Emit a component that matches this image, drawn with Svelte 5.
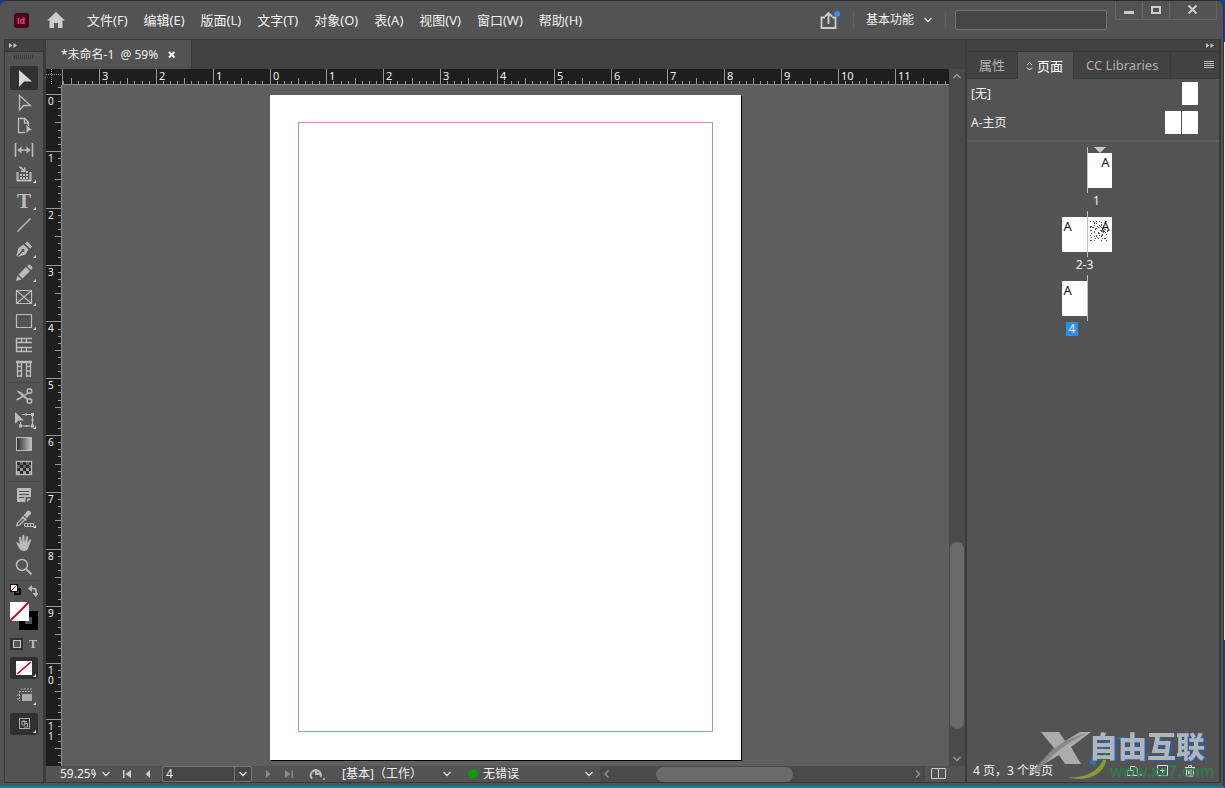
<script lang="ts">
	// Page layout workspace: menu bar, tool strip, document view with rulers, pages panel.
	const INCH = 56.85;
	const PAGE_W = 471;
	const PAGE_TOP = 10;

	let rulerWidth = $state(886);
	let rulerHeight = $state(681);

	const menus = ['文件(F)', '编辑(E)', '版面(L)', '文字(T)', '对象(O)', '表(A)', '视图(V)', '窗口(W)', '帮助(H)'];

	// One tick per eighth of an inch, numbered on the whole inch
	function ticks(origin: number, length: number) {
		const out = [];
		const first = Math.ceil((-origin / INCH) * 8);
		const last = Math.floor(((length - origin) / INCH) * 8);
		for (let i = first; i <= last; i++) {
			const major = i % 8 === 0;
			out.push({
				pos: Math.round(origin + (i * INCH) / 8),
				size: major ? 16 : i % 4 === 0 ? 7 : 4,
				label: major ? String(Math.abs(i / 8)) : ''
			});
		}
		return out;
	}

	const hTicks = $derived(ticks((rulerWidth - PAGE_W) / 2 - 1, rulerWidth));
	const vTicks = $derived(ticks(PAGE_TOP - 1, rulerHeight));

	// Icon bodies on a 28x24 grid
	const icons: Record<string, string> = {
		select: '<path d="M9 4v17l5-5.500h8z"/>',
		direct: '<path d="M9.500 5.500v14.500l4-4.500h7z" fill="none" stroke="currentColor" stroke-width="1.300"/>',
		page: '<path d="M15 18.500H8.500v-14h6.500l3.500 4V12M14.500 4.500v4.500h4" fill="none" stroke="currentColor" stroke-width="1.300"/><path d="M16.500 11l5.500 5-3.200.4-2.300 3z"/>',
		gap: '<path d="M5.500 5v14M22.500 5v14M8 12h12" fill="none" stroke="currentColor" stroke-width="1.600"/><path d="M7.500 12l4-3.500v7zM20.500 12l-4-3.500v7z"/>',
		collect: '<path d="M7.500 10v8.500h13V10" fill="none" stroke="currentColor" stroke-width="2"/><path d="M9 4.500h2l3 3V5.500h1.500V10H11V8.500h1.800L9 5.500zM10 12h2v2h-2zM13 12h2v2h-2zM16 12h2v2h-2zM10 15h2v2h-2zM13 15h2v2h-2zM16 15h2v2h-2zM16 9h2v2h-2z"/>',
		type: '<text x="14" y="19" text-anchor="middle" font-family="Liberation Serif, serif" font-weight="700" font-size="21">T</text>',
		line: '<path d="M7.500 18.500l13-13" fill="none" stroke="currentColor" stroke-width="1.400"/>',
		pen: '<path d="M6 20l2.500-9 5-3.500 5 5-3 5L7.500 20l5-5a1.500 1.500 0 1 0-1-1zM15 6.500l2.500-2 4.500 5-2 2z"/>',
		pencil: '<path d="M6 20l1.500-5.500 4 4zM8.500 13.500l7.500-7.500 4 4-7.500 7.500zM17 5l1.500-1.300h1.500L22.300 6v1.500L21 9z"/>',
		frame: '<path d="M6.500 5.500h15v13h-15zM6.500 5.500l15 13M21.500 5.500l-15 13" fill="none" stroke="currentColor" stroke-width="1.200"/>',
		rect: '<path d="M6.500 5.500h15v13h-15z" fill="none" stroke="currentColor" stroke-width="1.200"/>',
		rows: '<path d="M6 5.500h16M6 9.500h16M6 14.500h16M6 18.500h16M6.500 5v14M11.500 5.500v4M16.500 5.500v4M11.500 14.500v4M16.500 14.500v4" fill="none" stroke="currentColor" stroke-width="1.400"/>',
		cols: '<path d="M6 5.500h16M6 4.500h16M7.500 5v15M11.500 5v15M16.500 5v15M20.500 5v15M7.500 9.500h4M16.500 9.500h4M7.500 14h4M16.500 14h4M7.500 19h4M16.500 19h4" fill="none" stroke="currentColor" stroke-width="1.300"/>',
		scissors: '<g fill="none" stroke="currentColor" stroke-width="1.500"><circle cx="19.500" cy="7" r="2.300"/><circle cx="19.500" cy="17" r="2.300"/></g><path d="M6 6.500c3 .2 6 2 8 4.200l3.800-2.200.7 1L8.500 16l-2 .2v-1.200l5.500-3zM13 13l1.500-1.500 4 3.500-.8 1.200z"/>',
		transform: '<path d="M5 4v12l3.500-3.500H14z"/><path d="M12 6.500h10.500v11.500H10.500v-4" fill="none" stroke="currentColor" stroke-width="1.200"/><path d="M21 5h3v3h-3zM21 16.500h3v3h-3zM9 16.500h3v3H9zM15 5.500h2v2h-2zM15.500 17h2v2h-2zM21.500 11h2v2h-2z"/>',
		gradient: '<defs><linearGradient id="tone"><stop offset="0" stop-color="#2b2b2b"/><stop offset="1" stop-color="#c4c4c4"/></linearGradient></defs><rect x="6.500" y="5.500" width="15" height="13" fill="url(#tone)" stroke="currentColor"/>',
		feather: '<rect x="6.500" y="5.500" width="15" height="13" fill="#262626" stroke="currentColor" stroke-width="1.300"/><g opacity=".45"><path d="M10 6h3v3h-3zM16 6h3v3h-3zM7 9h3v3H7zM13 9h3v3h-3zM19 9h2v3h-2z"/></g><path d="M10 12h3v3h-3zM16 12h3v3h-3zM7 15h3v3H7zM13 15h3v3h-3zM19 15h2v3h-2z" opacity=".8"/>',
		note: '<path d="M7 5h14v9h-5.500v5H7zM17 15.500h4L17 19z"/><path d="M9 8.500h10M9 11.500h10M9 14.500h5" stroke="#535353" stroke-width="1.200"/>',
		dropper: '<path d="M13.500 8l1.500-1 2-3c2-1.800 5.500 1.400 3.600 3.600L18 9.500 17 11.500z"/><path d="M14 9.500L7.500 16l-.8 2.800 2.800-.8L16 11.500M12 10l4.500 3.500" fill="none" stroke="currentColor" stroke-width="1.300"/><path d="M14.500 16.500h9v3h-9zM17.500 16.500v3M20.500 16.500v3" fill="none" stroke="currentColor"/>',
		hand: '<path d="M6.300 11.500c1-1 2.400.2 3.500 2L9 6.800c0-1.200 1.500-1.400 1.900-.2l1.300 5 .1-6.800c.1-1.300 1.800-1.300 2 0l.4 6.700 1.600-5.700c.4-1.200 2-.8 1.800.5l-.9 6.200 2.200-3.700c.7-1 2-.3 1.600.8l-2.500 6.900c-.8 2.500-2 3.500-4.500 3.500-2.600 0-3.800-1-5-3z"/>',
		zoom: '<circle cx="12" cy="10" r="5.500" fill="none" stroke="currentColor" stroke-width="1.500"/><path d="M15.500 13.500l6 6" stroke="currentColor" stroke-width="2"/>'
	};

	const groups = [
		[['select', '选择工具', 0], ['direct', '直接选择工具', 0], ['page', '页面工具', 0], ['gap', '间隙工具', 0], ['collect', '内容收集器工具', 1]],
		[['type', '文字工具', 1], ['line', '直线工具', 0], ['pen', '钢笔工具', 1], ['pencil', '铅笔工具', 1], ['frame', '矩形框架工具', 1], ['rect', '矩形工具', 1], ['rows', '水平网格工具', 0], ['cols', '垂直网格工具', 0]],
		[['scissors', '剪刀工具', 0], ['transform', '自由变换工具', 1], ['gradient', '渐变色板工具', 0], ['feather', '渐变羽化工具', 0]],
		[['note', '附注工具', 0], ['dropper', '颜色主题工具', 1], ['hand', '抓手工具', 0], ['zoom', '缩放显示工具', 0]]
	] as [string, string, number][][];

	let tool = $state('select');
	let pageNo = $state('4');
	let zoom = $state('59.25%');
	let search = $state('');

	const spreads = [
		{ label: '1', left: false, right: true },
		{ label: '2-3', left: true, right: true },
		{ label: '4', left: true, right: false }
	];

	// Speckle standing in for body copy in the page 3 thumbnail
	const specks = Array.from({ length: 80 }, (_, i) => ({
		x: 2 + (Math.floor(Math.abs(Math.sin(i * 12.9898) * 43758)) % 18),
		y: 4 + (Math.floor(Math.abs(Math.sin(i * 78.233) * 12345)) % 20)
	}));
</script>

{#snippet chevron()}
	<svg class="chev" width="10" height="8" viewBox="0 0 10 8" aria-hidden="true"><path d="M1.500 2l3.500 3.500L8.500 2" /></svg>
{/snippet}

{#snippet collapse()}
	<svg width="9" height="7" viewBox="0 0 9 7" fill="currentColor" aria-hidden="true"><path d="M0 1l3.500 2.500L0 6zM4.500 1L8 3.500 4.500 6z" /></svg>
{/snippet}

<div class="desktop">
	<div class="window">
		<header class="titlebar">
			<svg class="logo" width="15" height="15" viewBox="0 0 15 15" aria-label="Id">
				<rect width="15" height="15" rx="3" fill="#49021f" />
				<text x="7" y="11" text-anchor="middle">Id</text>
			</svg>
			<button class="home" aria-label="主页">
				<svg width="18" height="16" viewBox="0 0 18 16" fill="currentColor"><path d="M9 0L0 8.500h2.500V16h4.500v-5h4v5h4.500V8.500H18z" /></svg>
			</button>
			<nav>
				{#each menus as menu}
					<button>{menu}</button>
				{/each}
			</nav>
			<button class="share" aria-label="共享">
				<svg width="22" height="20" viewBox="0 0 22 20" fill="none" stroke="currentColor" stroke-width="1.800">
					<path d="M6 7.500H2.500v10.500h14V7.500H13M9.500 14V4M6 6.500L9.500 3 13 6.500" />
					<circle cx="18" cy="4" r="3" fill="#3a8ef0" stroke="none" />
				</svg>
			</button>
			<label class="workspace">
				<select aria-label="工作区"><option>基本功能</option></select>
				{@render chevron()}
			</label>
			<input class="search" type="search" aria-label="搜索" bind:value={search} />
			<div class="controls">
				<button aria-label="最小化"><svg width="12" height="12" viewBox="0 0 12 12"><path d="M1 8.500h10" stroke-width="3" /></svg></button>
				<button aria-label="最大化"><svg width="12" height="12" viewBox="0 0 12 12"><path d="M2 3h8v6H2z" stroke-width="2" /></svg></button>
				<button class="close" aria-label="关闭"><svg width="12" height="12" viewBox="0 0 12 12"><path d="M1.500 1.500l8 8M9.500 1.500l-8 8" stroke-width="2" /></svg></button>
			</div>
		</header>

		<main>
			<aside class="tools">
				<div class="strip">{@render collapse()}</div>
				<div class="grip"></div>
				{#each groups as group}
					<div class="group">
						{#each group as [id, label, more]}
							<button class="tool" class:active={tool === id} aria-label={label} title={label} onclick={() => (tool = id)}>
								<svg width="28" height="24" viewBox="0 0 28 24" fill="currentColor">
									{@html icons[id]}
									{#if more}<path class="more" d="M26 18v3h-3z" />{/if}
								</svg>
							</button>
						{/each}
					</div>
				{/each}
				<svg class="colors" width="28" height="73" viewBox="0 1 28 73" role="img" aria-label="填色和描边">
					<path d="M5 9h5v5H5z" stroke="#000" fill="none" stroke-width="2" />
					<rect x="0.500" y="4.500" width="7" height="7" fill="#eee" stroke="#111" />
					<path d="M1 11l6-6" stroke="#d22" />
					<path d="M20 8.500h3.500q2.500 0 2.500 2.500v3" fill="none" stroke="#bbb" stroke-width="1.600" />
					<path d="M18 8.500l4-3.500v7zM22.500 13h6.500l-3.200 4z" fill="#bbb" />
					<path d="M9 31h19v19H9zM15 37v7h7v-7z" fill="#000" fill-rule="evenodd" />
					<rect x="0" y="22" width="19" height="19" fill="#fff" />
					<path d="M0 41l19-19" stroke="#d0021b" stroke-width="1.800" />
					<rect x="0" y="58" width="13" height="12" rx="1" fill="#333" />
					<rect x="3.500" y="60.500" width="7" height="7" fill="#555" stroke="#c4c4c4" />
					<text x="23" y="68" text-anchor="middle" font-family="Liberation Serif, serif" font-weight="700" font-size="12" fill="#c4c4c4">T</text>
				</svg>
				<button class="mode active" aria-label="应用无">
					<svg width="28" height="22" viewBox="0 0 28 22"><rect x="6" y="4" width="16" height="14" fill="#fff" /><path d="M7 17L21 5" stroke="#d0021b" stroke-width="1.600" /><path class="more" d="M26 17v3h-3z" /></svg>
				</button>
				<button class="mode" aria-label="视图选项">
					<svg width="28" height="22" viewBox="0 0 28 22" fill="#aaa"><path d="M12 9h10v7H12z" /><path d="M9 6.500h13M9.500 6v10M12 3v3M15 3v3M18 3v3M21 3v3M7 10h2M7 14h2" fill="none" stroke="#aaa" stroke-dasharray="2 1" /><path class="more" d="M26 17v3h-3z" /></svg>
				</button>
				<button class="mode active" aria-label="屏幕模式">
					<svg width="28" height="22" viewBox="0 0 28 22" fill="none" stroke="#aaa"><rect x="9.500" y="5.500" width="10" height="10" /><path d="M12 8h3v4h-3zM14 10.500h3.500V14H14M13 8.500h4" /><path class="more" d="M26 17v3h-3z" stroke="none" /></svg>
				</button>
			</aside>

			<section class="document">
				<div class="doctabs">
					<div class="doctab">
						<span>{'*未命名-1  @ 59%'}</span>
						<button aria-label="关闭文档"><svg width="8" height="8" viewBox="0 0 8 8"><path d="M1 1l5.500 5.500M6.500 1L1 6.500" stroke="#eee" stroke-width="2" /></svg></button>
					</div>
				</div>
				<div class="view">
					<svg class="corner" width="16" height="16" viewBox="0 0 16 16" aria-hidden="true"><path d="M0 5.500h16M5.500 0v16" stroke="#999" stroke-dasharray="1 1" /></svg>
					<div class="hruler" bind:clientWidth={rulerWidth}>
						<svg width="100%" height="15">
							{#each hTicks as t}
								<path d="M{t.pos + 0.5} {16 - t.size}V16" />
								{#if t.label}<text x={t.pos + 3} y="11">{t.label}</text>{/if}
							{/each}
						</svg>
					</div>
					<div class="vruler" bind:clientHeight={rulerHeight}>
						<svg width="15" height="100%">
							{#each vTicks as t}
								<path d="M{16 - t.size} {t.pos + 0.5}H16" />
								{#each t.label.split('') as digit, n}
									<text x="2" y={t.pos + 11 + n * 10}>{digit}</text>
								{/each}
							{/each}
						</svg>
					</div>
					<div class="canvas">
						<div class="sheet"><div class="margins"></div></div>
					</div>
					<div class="vscroll">
						<svg class="chev dim" width="10" height="8" viewBox="0 0 10 8"><path d="M1.500 6L5 2.500 8.500 6" /></svg>
						<div class="thumb"></div>
						<svg class="chev dim" width="10" height="8" viewBox="0 0 10 8"><path d="M1.500 2L5 5.500 8.500 2" /></svg>
					</div>
				</div>
				<footer class="status">
					<label class="zoom">
						<input aria-label="缩放级别" bind:value={zoom} />
						{@render chevron()}
					</label>
					<button class="step" aria-label="第一页"><svg width="10" height="10" viewBox="0 0 10 10"><path d="M1 1h1.500v8H1zM9 1v8L3.500 5z" /></svg></button>
					<button class="step" aria-label="上一页"><svg width="10" height="10" viewBox="0 0 10 10"><path d="M7 1v8L2.500 5z" /></svg></button>
					<label class="pageno">
						<input aria-label="页码" bind:value={pageNo} />
						<span>{@render chevron()}</span>
					</label>
					<button class="step off" aria-label="下一页"><svg width="10" height="10" viewBox="0 0 10 10"><path d="M3 1v8l4.500-4z" /></svg></button>
					<button class="step off" aria-label="最后一页"><svg width="10" height="10" viewBox="0 0 10 10"><path d="M7.500 1H9v8H7.500zM1 1v8l5.500-4z" /></svg></button>
					<button class="cloud" aria-label="打开"><svg width="18" height="14" viewBox="0 0 18 14"><path d="M4 11.500A5 5 0 1 1 12.500 10M8 2v5h4" fill="none" stroke="#bbb" stroke-width="2" /><circle cx="16" cy="12" r="1" fill="#bbb" /></svg></button>
					<label class="profile">
						<select aria-label="印前检查配置文件"><option>[基本]（工作）</option></select>
						{@render chevron()}
					</label>
					<label class="errors">
						<i></i>
						<select aria-label="印前检查"><option>无错误</option></select>
						{@render chevron()}
					</label>
					<div class="hscroll">
						<svg class="chev dim" width="8" height="10" viewBox="0 0 8 10"><path d="M5.500 1.500L2 5l3.500 3.500" /></svg>
						<div class="thumb"></div>
						<svg class="chev dim" width="8" height="10" viewBox="0 0 8 10"><path d="M2 1.500L5.500 5 2 8.500" /></svg>
					</div>
					<button class="split" aria-label="拆分版面视图"><svg width="16" height="12" viewBox="0 0 16 12"><path d="M.5.5h14v10H.5zM7.500.5v10" fill="none" stroke="#c8c8c8" /></svg></button>
				</footer>
			</section>

			<aside class="panel">
				<div class="strip end">{@render collapse()}</div>
				<div class="tabs">
					<button>属性</button>
					<button class="current">
						<svg width="7" height="10" viewBox="0 0 7 10" fill="none" stroke="currentColor"><path d="M1 4l2.500-2.500L6 4M1 6.500L3.500 9 6 6.500" /></svg>
						页面
					</button>
					<button>CC Libraries</button>
					<button class="burger" aria-label="面板菜单"><svg width="10" height="8" viewBox="0 0 10 8"><path d="M0 .5h10M0 2.500h10M0 4.500h10M0 6.500h10" stroke="#bbb" /></svg></button>
				</div>
				<div class="masters">
					<div class="master"><span>[无]</span><i></i></div>
					<div class="master"><span>A-主页</span><i></i><i></i></div>
				</div>
				<div class="pages">
					{#each spreads as s, n}
						<div class="spread">
							<div class="leaves">
								<div class="slot">{#if s.left}<div class="leaf">A</div>{/if}</div>
								<div class="slot spine">
									{#if n === 0}<svg class="marker" width="12" height="6" viewBox="0 0 12 6"><path d="M0 0h12L6 6z" fill="#c8c8c8" /></svg>{/if}
									{#if s.right}
										<div class="leaf right">
											{#if s.left}
												<svg class="copy" width="24" height="35" viewBox="0 0 24 35">
													{#each specks as p}<rect x={p.x} y={p.y} width="1" height="1" />{/each}
												</svg>
											{/if}
											<span>A</span>
										</div>
									{/if}
								</div>
							</div>
							<div class="caption" class:first={!s.left} class:last={!s.right}><span class:chosen={s.label === pageNo}>{s.label}</span></div>
						</div>
					{/each}
				</div>
				<footer class="summary">
					<span>4 页，3 个跨页</span>
					<button aria-label="编辑页面大小"><svg width="16" height="12" viewBox="0 0 16 12"><path d="M1.500 5.500h6v5h-6zM4.500 5V1.500H9L11.500 4v6.500h-4" /><path d="M14 10h2" /></svg></button>
					<button aria-label="新建页面"><svg width="12" height="12" viewBox="0 0 12 12"><path d="M.5.5h10v10H.5zM5.500 3v5M3 5.500h5" /></svg></button>
					<button aria-label="删除选中页面"><svg width="12" height="12" viewBox="0 0 12 12"><path d="M1 2.500h10M4.500 2V.5h3V2M2.500 2.500v8.500h7V2.500M4.500 4.500v5M6 4.500v5M7.500 4.500v5" /></svg></button>
				</footer>
			</aside>
		</main>
	</div>

	<svg class="mark" width="192" height="56" viewBox="0 0 192 56" aria-hidden="true">
		<path d="M60 34C66 16 84 6 100 8 82 10 70 20 66 38z" fill="#2f76ae" opacity=".75" />
		<path d="M38 48c20 2 36-8 38-24 6 14-12 32-38 24z" fill="#8aae2c" opacity=".85" />
		<text class="name" x="60" y="29">自由互联</text>
		<text class="site" x="81" y="48">www.xz7.com</text>
		<path d="M12 3h18l6 9L51 3h11L42 18l10 17H36l-6-9L12 37l-9 7 22-25z" fill="#bcbcbc" opacity=".85" />
		<path d="M3 44C18 22 34 10 58 4 38 14 24 24 10 42z" fill="#777" opacity=".7" />
	</svg>
</div>

<style>
	:global(body) {
		margin: 0;
		background: #535353;
	}
	.desktop {
		position: relative;
		box-sizing: border-box;
		height: 100vh;
		padding: 0 1px 2px 0;
		background: linear-gradient(#0a46b4 42px, #e8e8e8 42px, #e8e8e8 640px, #12489e 640px);
		font: 12px/16px 'Noto Sans', 'Noto Sans CJK SC', sans-serif;
		color: #f0f0f0;
		overflow: hidden;
	}
	.window {
		display: flex;
		flex-direction: column;
		box-sizing: border-box;
		height: 100%;
		padding: 0 2px 3px 4px;
		border-top: 1px solid #2c2c2c;
		border-right: 1px solid #333;
		border-radius: 6px 6px 0 0;
		background: #535353;
		box-shadow: 0 2px #1878b0;
	}
	button,
	select,
	input {
		margin: 0;
		padding: 0;
		border: 0;
		background: none;
		color: inherit;
		font: inherit;
		appearance: none;
		outline: 0;
	}
	svg {
		display: block;
		flex: none;
	}
	.chev {
		fill: none;
		stroke: #ddd;
		stroke-width: 1.3;
		pointer-events: none;
	}
	.dim {
		stroke: #999;
	}
	.more {
		fill: #e0e0e0;
	}

	.titlebar {
		display: flex;
		align-items: center;
		height: 38px;
		padding: 0 1px 0 10px;
	}
	.logo text {
		fill: #ff3c78;
		font: bold 9px 'Liberation Sans', sans-serif;
	}
	.home {
		margin-left: 18px;
		color: #ccc;
	}
	nav {
		display: flex;
		flex: 1;
		gap: 16px;
		margin-left: 22px;
		font-size: 13px;
		white-space: nowrap;
	}
	.share {
		padding-right: 12px;
		border-right: 1px solid #606060;
		color: #ccc;
	}
	.workspace {
		display: flex;
		align-items: center;
		gap: 8px;
		padding: 0 12px;
		border-right: 1px solid #606060;
	}
	.search {
		box-sizing: border-box;
		width: 152px;
		height: 20px;
		margin-left: 9px;
		border: 1px solid #707070;
		border-radius: 2px;
		background: #454545;
	}
	.controls {
		display: flex;
		align-self: flex-start;
		margin: 0 3px 0 8px;
		border: 1px solid #666;
		border-top: 0;
	}
	.controls button {
		display: grid;
		place-items: center;
		width: 27px;
		height: 18px;
		border-right: 1px solid #666;
	}
	.controls .close {
		width: 46px;
		border: 0;
	}
	.controls path {
		fill: none;
		stroke: #ccc;
	}

	main {
		display: flex;
		flex: 1;
		min-height: 0;
		border: 1px solid #383838;
		border-right-width: 2px;
	}
	.strip {
		display: flex;
		align-items: center;
		height: 11px;
		padding: 0 4px;
		border-bottom: 1px solid #383838;
		background: #424242;
		color: #c0c0c0;
	}
	.end {
		justify-content: flex-end;
	}

	.tools {
		display: flex;
		flex-direction: column;
		width: 38px;
		border-right: 3px solid #3c3c3c;
		color: #bbb;
	}
	.grip {
		height: 4px;
		margin: 3px 9px 7px;
		background: repeating-linear-gradient(90deg, #3a3a3a 0 1px, #535353 1px 2px);
	}
	.group {
		display: flex;
		flex-direction: column;
		margin: 0 3px 0 2px;
		padding: 0 3px 1px;
		border-bottom: 1px solid #484848;
	}
	.group + .group {
		padding-top: 1px;
	}
	.tool {
		width: 28px;
		height: 24px;
		border-radius: 3px;
	}
	.active {
		background: #303030;
		color: #d8d8d8;
	}
	.colors {
		margin-left: 5px;
	}
	.mode {
		width: 28px;
		height: 22px;
		margin: 3px 5px;
		border-radius: 3px;
	}

	.document {
		display: flex;
		flex: 1;
		flex-direction: column;
		min-width: 0;
	}
	.doctabs {
		display: flex;
		height: 29px;
		background: #424242;
	}
	.doctab {
		display: flex;
		align-items: center;
		gap: 10px;
		padding: 0 15px;
		border-right: 1px solid #383838;
		background: #535353;
		white-space: pre;
	}
	.view {
		display: grid;
		flex: 1;
		grid-template: 16px 1fr / 16px 1fr 16px;
		min-height: 0;
		background: #5e5e5e;
	}
	.corner,
	.hruler,
	.vruler {
		background: #1e1e1e;
		overflow: hidden;
	}
	.hruler {
		border-bottom: 1px solid #8c8c8c;
		border-left: 1px solid #8c8c8c;
	}
	.vruler {
		border-right: 1px solid #8c8c8c;
		grid-row: 2;
	}
	.hruler path,
	.vruler path {
		stroke: #9a9a9a;
	}
	.hruler text,
	.vruler text {
		fill: #f0f0f0;
		font-size: 11px;
	}
	.vruler text {
		font-size: 10px;
	}
	.canvas {
		display: flex;
		grid-row: 2;
		justify-content: center;
		padding-top: 10px;
		overflow: hidden;
	}
	.sheet {
		display: flex;
		flex: none;
		box-sizing: border-box;
		width: 471px;
		height: 665px;
		padding: 27px 28px 28px;
		background: #fff;
		box-shadow: 1px 1px #000;
	}
	.margins {
		flex: 1;
		border: 1px solid #a294d2;
		border-top-color: #c48fc0;
		border-bottom-color: #c48fc0;
	}
	.vscroll {
		display: flex;
		flex-direction: column;
		grid-area: 1 / 3 / 3 / 4;
		align-items: center;
		justify-content: space-between;
		padding: 3px 0;
		background: #4a4a4a;
	}
	.vscroll .thumb {
		width: 14px;
		height: 27%;
		margin-top: auto;
		margin-bottom: 26px;
		border-radius: 7px;
		background: #6a6a6a;
	}
	.status {
		display: flex;
		align-items: center;
		height: 16px;
		padding-left: 14px;
	}
	.zoom {
		display: flex;
		align-items: center;
		gap: 5px;
		width: 56px;
	}
	.zoom input {
		width: 36px;
	}
	.step {
		display: grid;
		place-items: center;
		width: 21px;
		fill: #ccc;
	}
	.off {
		fill: #8a8a8a;
	}
	.pageno {
		display: flex;
		box-sizing: border-box;
		width: 90px;
		height: 16px;
		margin: 0 5px 0 4px;
		border: 1px solid #777;
		border-radius: 2px;
		background: #454545;
	}
	.pageno input {
		flex: 1;
		min-width: 0;
		padding-left: 3px;
	}
	.pageno span {
		display: grid;
		place-items: center;
		width: 16px;
		border-left: 1px solid #777;
	}
	.cloud {
		margin-left: 9px;
	}
	.profile,
	.errors {
		display: flex;
		align-items: center;
	}
	.profile {
		width: 110px;
		margin-left: 16px;
	}
	.profile select,
	.errors select {
		flex: 1;
	}
	.errors {
		gap: 5px;
		width: 126px;
		margin-left: 16px;
	}
	.errors i {
		width: 10px;
		height: 10px;
		border-radius: 50%;
		background: #0d990d;
	}
	.hscroll {
		display: flex;
		flex: 1;
		align-items: center;
		height: 16px;
		margin-left: 6px;
		padding: 0 3px;
		background: #4a4a4a;
	}
	.hscroll .thumb {
		width: 43%;
		height: 15px;
		margin: 0 auto 0 14%;
		border-radius: 8px;
		background: #6a6a6a;
	}
	.split {
		padding: 0 18px 0 6px;
	}

	.panel {
		display: flex;
		flex-direction: column;
		width: 252px;
		border-left: 2px solid #3a3a3a;
	}
	.tabs {
		display: flex;
		height: 27px;
		background: #424242;
		color: #b0b0b0;
	}
	.tabs button {
		padding: 0 12px;
		border-right: 1px solid #393939;
		border-bottom: 1px solid #393939;
		font-size: 13px;
	}
	.tabs .current {
		display: flex;
		align-items: center;
		gap: 4px;
		padding: 0 10px 0 8px;
		border-bottom: 0;
		background: #535353;
		color: #fff;
	}
	.tabs .burger {
		display: flex;
		flex: 1;
		align-items: center;
		justify-content: flex-end;
		padding: 0 5px;
		border-right: 0;
	}
	.masters {
		padding-bottom: 3px;
		border-bottom: 2px solid #5e5e5e;
	}
	.master {
		display: flex;
		align-items: center;
		gap: 1px;
		height: 29px;
		padding: 0 21px 0 4px;
	}
	.master span {
		flex: 1;
	}
	.master i {
		width: 16px;
		height: 23px;
		background: #fff;
	}
	.pages {
		display: flex;
		flex: 1;
		flex-direction: column;
		align-items: center;
		min-height: 0;
		padding: 5px 13px 0 0;
		overflow: hidden;
	}
	.spread {
		flex: none;
		height: 64px;
		line-height: 14px;
	}
	.leaves {
		display: flex;
		height: 46px;
	}
	.slot {
		position: relative;
		width: 25px;
		padding-top: 6px;
	}
	.spine {
		width: 24px;
		height: 40px;
		border-left: 1px solid #c0c0c0;
	}
	.leaf {
		position: relative;
		box-sizing: border-box;
		height: 35px;
		padding: 2px;
		background: #fff;
		color: #111;
		font-size: 13px;
	}
	.right {
		text-align: right;
	}
	.right span {
		position: relative;
	}
	.copy {
		position: absolute;
		inset: 0;
		fill: #555;
	}
	.marker {
		position: absolute;
		top: 0;
		left: 6px;
	}
	.caption {
		display: flex;
		justify-content: center;
		padding: 1px 4px 0 0;
	}
	.first {
		padding-left: 24px;
	}
	.last {
		padding-right: 29px;
	}
	.caption span {
		padding: 0 3px;
	}
	.chosen {
		background: #2d8cf0;
	}
	.summary {
		display: flex;
		align-items: center;
		gap: 15px;
		height: 23px;
		padding: 0 23px 0 6px;
	}
	.summary span {
		flex: 1;
	}
	.summary path {
		fill: none;
		stroke: #ddd;
	}

	/* Site badge floats above the panel corner */
	.mark {
		position: absolute;
		right: 4px;
		bottom: 3px;
		pointer-events: none;
	}
	.name {
		fill: #b9c0ca;
		font: 900 29px 'Noto Sans CJK SC', sans-serif;
		filter: drop-shadow(3px 1px #2f5f9a);
		opacity: 0.9;
	}
	.site {
		fill: #1f8a50;
		font: bold 16px 'Liberation Sans', sans-serif;
		opacity: 0.75;
	}
</style>
